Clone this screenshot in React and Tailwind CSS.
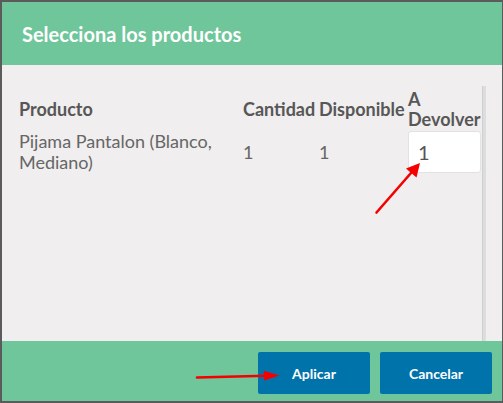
const rows = [
  { id: 'pijama', name: 'Pijama Pantalon (Blanco, Mediano)', qty: 1, available: 1, toReturn: '1' },
]

function Arrows() {
  return (
    <svg className="pointer-events-none absolute left-0 top-0" width="503" height="403" viewBox="0 0 503 403">
      <line x1="376.5" y1="212.5" x2="411" y2="173" stroke="#f50000" strokeWidth="2.6" strokeLinecap="round" />
      <polygon points="420,163 416.5,177.5 406,168.5" fill="#f50000" />
      <line x1="197" y1="377.5" x2="266" y2="375.8" stroke="#f50000" strokeWidth="2.6" strokeLinecap="round" />
      <polygon points="279.5,375.5 264,380.5 263.8,370.8" fill="#f50000" />
    </svg>
  )
}

export default function App() {
  return (
    <div
      className="relative h-[403px] w-[503px] overflow-hidden bg-[#5b5b5b] pl-[2px] pt-[2px]"
      style={{ fontFamily: 'Lato, "Open Sans", sans-serif' }}
    >
      <div className="flex h-[399px] w-[500px] flex-col">
        <header className="flex h-[63px] items-center bg-[#6fc69a] pl-[20px]">
          <h1 className="text-[20px] font-bold text-white">Selecciona los productos</h1>
        </header>

        <section className="flex h-[276px] bg-[#f0eeee]">
          <div className="pl-[17px] pt-[22px]">
            <div className="grid grid-cols-[224px_76px_89px_73px] items-center text-[18px]">
              <div className="font-bold leading-[20px] text-[#575757]">Producto</div>
              <div className="font-bold leading-[20px] text-[#575757]">Cantidad</div>
              <div className="font-bold leading-[20px] text-[#575757]">Disponible</div>
              <div className="py-[2px] font-bold leading-[20px] text-[#575757]">
                A<br />Devolver
              </div>
              {rows.map((row) => (
                <div key={row.id} className="contents">
                  <div className="pr-4 leading-[21px] text-[#666]">{row.name}</div>
                  <div className="leading-[21px] text-[#666]">{row.qty}</div>
                  <div className="leading-[21px] text-[#666]">{row.available}</div>
                  <input
                    defaultValue={row.toReturn}
                    className="h-[42px] w-[73px] rounded-[3px] border border-[#e2e2e2] bg-white pl-[9px] text-[20px] text-[#555] outline-none"
                  />
                </div>
              ))}
            </div>
          </div>
          <div className="ml-[1px] mt-[21px] w-[4px] border-l border-[#cfcfcf] bg-[#dddddd]" />
        </section>

        <footer className="flex h-[60px] items-start justify-end gap-[10px] bg-[#6fc69a] pr-[10px] pt-[11px]">
          <button className="h-[42px] w-[112px] rounded-[2px] bg-[#0073aa] text-[14px] font-bold text-white">
            Aplicar
          </button>
          <button className="h-[42px] w-[112px] rounded-[2px] bg-[#0073aa] text-[14px] font-bold text-white">
            Cancelar
          </button>
        </footer>
      </div>
      <Arrows />
    </div>
  )
}
